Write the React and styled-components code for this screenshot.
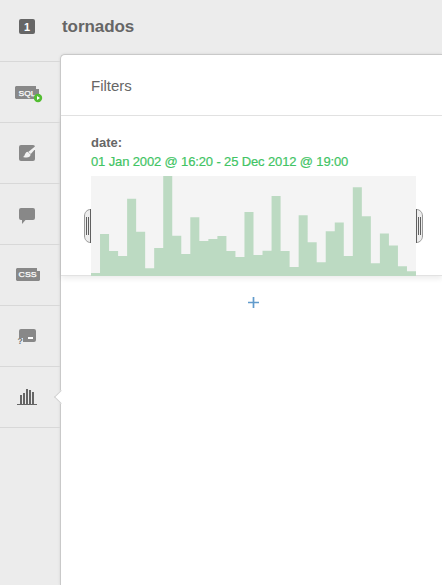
import React from "react";
import styled, { createGlobalStyle } from "styled-components";

const GlobalStyle = createGlobalStyle`
  * { box-sizing: border-box; }
  body {
    margin: 0;
    background: #ececec;
    font-family: "Liberation Sans", Arial, sans-serif;
    overflow: hidden;
  }
`;

const Page = styled.div`
  display: flex;
  height: 585px;
  overflow: hidden;
  background: #ececec;
`;

const Sidebar = styled.nav`
  flex: 0 0 60px;
  display: flex;
  flex-direction: column;
`;

const Tab = styled.button`
  position: relative;
  display: flex;
  align-items: flex-start;
  flex: 0 0 ${(p) => (p.$first ? 62 : 61)}px;
  padding: 0;
  border: 0;
  border-bottom: 1px solid #d8d8d8;
  background: transparent;

  svg { display: block; width: 60px; height: 60px; }
`;

const Notch = styled.span`
  position: absolute;
  z-index: 1;
  right: -6px;
  top: 25px;
  width: 10px;
  height: 10px;
  transform: rotate(45deg);
  background: #fff;
  border-left: 1px solid #d0d0d0;
  border-bottom: 1px solid #d0d0d0;
`;

const Main = styled.main`
  flex: 1;
  min-width: 0;
  display: flex;
  flex-direction: column;
`;

const Title = styled.h1`
  flex: 0 0 54px;
  margin: 0;
  padding-left: 2px;
  font-size: 17px;
  line-height: 53px;
  letter-spacing: -0.06px;
  color: #666;
`;

const Panel = styled.section`
  flex: 1;
  background: #fff;
  border: solid #c9c9c9;
  border-width: 1px 0 0 1px;
  border-top-left-radius: 5px;
  box-shadow: 0 0 3px rgba(0, 0, 0, 0.1);
`;

const PanelHeader = styled.header`
  height: 61px;
  padding-left: 30px;
  border-bottom: 1px solid #e2e2e2;
  font-size: 15px;
  line-height: 62px;
  color: #666;
`;

const Filter = styled.div`
  height: 160px;
  padding: 18px 26px 0 30px;
  border-bottom: 1px solid #e2e2e2;
  box-shadow: 0 3px 5px rgba(0, 0, 0, 0.07);
`;

const FilterName = styled.div`
  font-size: 13px;
  font-weight: bold;
  line-height: 18px;
  color: #666;
`;

const FilterRange = styled.div`
  height: 24px;
  font-size: 13px;
  line-height: 19px;
  letter-spacing: -0.135px;
  white-space: nowrap;
  color: #41c464;
  -webkit-text-stroke: 0.2px #41c464;
`;

const Histogram = styled.div`
  position: relative;
  width: 325px;
  height: 100px;
  background: #f4f4f4;

  > svg { display: block; }
`;

const Handle = styled.span`
  position: absolute;
  top: 33px;
  ${(p) => (p.$side === "left" ? "left: -7px;" : "right: -7px; transform: scaleX(-1);")}
  width: 7px;
  height: 34px;

  svg { display: block; }
`;

const AddFilter = styled.button`
  display: block;
  margin: 21px 0 0 187px;
  padding: 0;
  border: 0;
  background: none;
  color: #619bcc;

  svg { display: block; }
`;

const heights = [
  3, 42, 25, 20, 77.3, 44.3, 7.7, 28, 100, 40.3, 22, 58.7, 35, 37, 40, 25, 19, 64,
  21, 25.3, 80, 25, 9, 60.7, 33.7, 13.7, 44.7, 53.4, 20, 88.7, 59.7, 12.7, 42.6, 30.4, 9.7, 4.7,
];
const step = 325 / heights.length;
const outline =
  "M0 100" +
  heights.map((h, i) => `V${100 - h}H${((i + 1) * step).toFixed(2)}`).join("") +
  "V100Z";

const labelFont = '"Liberation Sans", Arial, sans-serif';

const LayerIcon = () => (
  <svg viewBox="0 0 60 60">
    <rect x="19" y="19" width="16" height="15" rx="2" fill="#666" />
    <text x="27" y="31" textAnchor="middle" fontSize="11" fontWeight="bold" fontFamily={labelFont} fill="#fff">1</text>
  </svg>
);

const SqlIcon = () => (
  <svg viewBox="0 0 60 60">
    <path d="M16 24H36V27H39V37H16L15 36V25Z" fill="#888" />
    <text x="18.5" y="33.5" fontSize="7.5" textLength="17" lengthAdjust="spacingAndGlyphs" fontFamily={labelFont} fill="#fff" stroke="#fff" strokeWidth="0.25">SQL</text>
    <circle cx="38" cy="36" r="4.2" fill="#53bd32" />
    <path d="M37 34L40 36L37 38Z" fill="#fff" />
  </svg>
);

const BrushIcon = () => (
  <svg viewBox="0 0 60 60">
    <rect x="19" y="22" width="16" height="16" rx="2" fill="#888" />
    <path d="M35 23.5V26.3L30.8 31L28.2 29Z" fill="#f2f2f2" />
    <path d="M27.6 28.8L30.6 31.6C30.4 34.4 27.5 35.2 23 34C25.1 33.3 24.6 29.4 27.6 28.8Z" fill="#f2f2f2" />
  </svg>
);

const CommentIcon = () => (
  <svg viewBox="0 0 60 60">
    <path d="M21 24H33Q35 24 35 26V34Q35 36 33 36H25.5L22 40V36H21Q19 36 19 34V26Q19 24 21 24Z" fill="#888" />
  </svg>
);

const CssIcon = () => (
  <svg viewBox="0 0 60 60">
    <path d="M17 23H37V26H40V35L39 36H17L16 35V24Z" fill="#888" />
    <text x="18.6" y="32.2" fontSize="7.5" textLength="18" lengthAdjust="spacingAndGlyphs" fontFamily={labelFont} fill="#fff" stroke="#fff" strokeWidth="0.25">CSS</text>
  </svg>
);

const InfoIcon = () => (
  <svg viewBox="0 0 60 60">
    <path d="M21 23H34Q36 23 36 25V34Q36 36 34 36H23V32H19V25Q19 23 21 23Z" fill="#888" />
    <rect x="28" y="31" width="5" height="2" fill="#fff" />
    <text x="17.6" y="38" fontSize="8.5" fontWeight="bold" fontFamily={labelFont} fill="#777">?</text>
  </svg>
);

const ChartIcon = () => (
  <svg viewBox="0 0 60 60">
    <path d="M20 28h2v9h-2zM23 26h2v11h-2zM26 22h2v15h-2zM29 23h2v14h-2zM32 25h2v12h-2zM17 37h20v1H17z" fill="#666" />
  </svg>
);

const HandleIcon = () => (
  <svg width="7" height="34" viewBox="0 0 7 34">
    <path d="M6.5 .5C3 .5 .5 3.5 .5 7V27C.5 30.5 3 33.5 6.5 33.5" fill="#ededed" stroke="#999" />
    <path d="M6.5 0V34M2.5 8V26M4.5 8V26" fill="none" stroke="#606060" />
  </svg>
);

const tabs = [LayerIcon, SqlIcon, BrushIcon, CommentIcon, CssIcon, InfoIcon, ChartIcon];

export default function App() {
  return (
    <>
      <GlobalStyle />
      <Page>
        <Sidebar>
          {tabs.map((Icon, i) => (
            <Tab key={i} $first={i === 0}>
              <Icon />
              {Icon === ChartIcon && <Notch />}
            </Tab>
          ))}
        </Sidebar>
        <Main>
          <Title>tornados</Title>
          <Panel>
            <PanelHeader>Filters</PanelHeader>
            <Filter>
              <FilterName>date:</FilterName>
              <FilterRange>01 Jan 2002 @ 16:20 - 25 Dec 2012 @ 19:00</FilterRange>
              <Histogram>
                <svg width="325" height="100">
                  <path d={outline} fill="#bcdac2" />
                </svg>
                <Handle $side="left"><HandleIcon /></Handle>
                <Handle $side="right"><HandleIcon /></Handle>
              </Histogram>
            </Filter>
            <AddFilter>
              <svg width="11" height="11" viewBox="0 0 11 11">
                <path d="M5.5 0V11M0 5.5H11" stroke="currentColor" strokeWidth="1.7" />
              </svg>
            </AddFilter>
          </Panel>
        </Main>
      </Page>
    </>
  );
}
